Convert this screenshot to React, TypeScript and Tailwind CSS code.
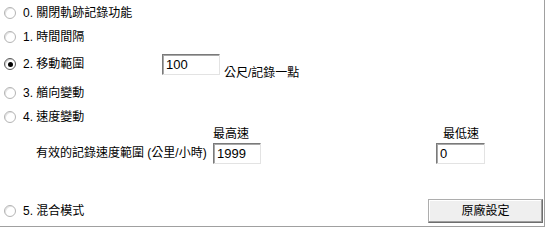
import React from "react";

const font = {
  fontFamily: '"Liberation Sans", "Noto Sans CJK TC", "Noto Sans CJK SC", sans-serif',
};

function Radio({ checked = false }: { checked?: boolean }) {
  return (
    <span
      className={
        "relative flex h-[12px] w-[12px] shrink-0 items-center justify-center rounded-full border bg-white " +
        (checked
          ? "border-[#5a5a5a] shadow-[inset_1px_1px_0_#d0d0d0]"
          : "border-[#b4b4b4] shadow-[inset_1px_1px_0_#e4e4e4]")
      }
    >
      {checked && <span className="h-[5px] w-[5px] rounded-full bg-black" />}
    </span>
  );
}

function Option({ label, checked = false }: { label: string; checked?: boolean }) {
  return (
    <div className="flex items-center">
      <Radio checked={checked} />
      <span className="ml-[7px] whitespace-nowrap leading-none">{label}</span>
    </div>
  );
}

function Field({ value, w }: { value: string; w: string }) {
  return (
    <input
      readOnly
      value={value}
      className={
        w +
        " h-[21px] shrink-0 border border-t-[#7a7a7a] border-l-[#7a7a7a] border-r-[#e3e3e3] border-b-[#e3e3e3] bg-white pl-[3px] text-[13px] leading-none text-black outline-none shadow-[inset_1px_1px_0_#a8a8a8]"
      }
      style={font}
    />
  );
}

export default function App() {
  return (
    <div
      className="flex h-[227px] w-[545px] flex-col border-r border-b border-[#a0a0a0] bg-white text-[12px] text-black"
      style={font}
    >
      <div className="flex h-[26px] items-center pl-[4px]">
        <Option label="0. 關閉軌跡記錄功能" />
      </div>
      <div className="flex h-[22px] items-center pl-[4px]">
        <Option label="1. 時間間隔" />
      </div>
      <div className="flex h-[32px] items-center pl-[4px]">
        <div className="w-[158px]">
          <Option label="2. 移動範圍" checked />
        </div>
        <Field value="100" w="w-[58px]" />
        <span className="ml-[4px] mt-[17px] whitespace-nowrap leading-none">公尺/記錄一點</span>
      </div>
      <div className="flex h-[26px] items-center pl-[4px]">
        <Option label="3. 艏向變動" />
      </div>
      <div className="flex h-[22px] items-center pl-[4px]">
        <Option label="4. 速度變動" />
      </div>
      <div className="flex h-[12px] items-center pl-[213px]">
        <span className="w-[36px] whitespace-nowrap leading-none">最高速</span>
        <span className="ml-[194px] whitespace-nowrap leading-none">最低速</span>
      </div>
      <div className="mt-[2px] flex h-[22px] items-center pl-[36px]">
        <span className="w-[177px] whitespace-nowrap leading-none">有效的記錄速度範圍 (公里/小時)</span>
        <Field value="1999" w="w-[48px]" />
        <div className="w-[175px]" />
        <Field value="0" w="w-[49px]" />
      </div>
      <div className="flex-1" />
      <div className="mb-[3px] flex h-[24px] items-center pl-[4px] pr-[1px]">
        <Option label="5. 混合模式" />
        <button
          className="ml-auto flex h-[24px] w-[115px] items-center justify-center border border-[#adadad] border-r-[#6e6e6e] border-b-[#6e6e6e] bg-[#efefef] text-[12px] leading-none text-black shadow-[inset_-1px_-1px_0_#a0a0a0,inset_1px_1px_0_#ffffff]"
          style={font}
        >
          原廠設定
        </button>
      </div>
    </div>
  );
}
